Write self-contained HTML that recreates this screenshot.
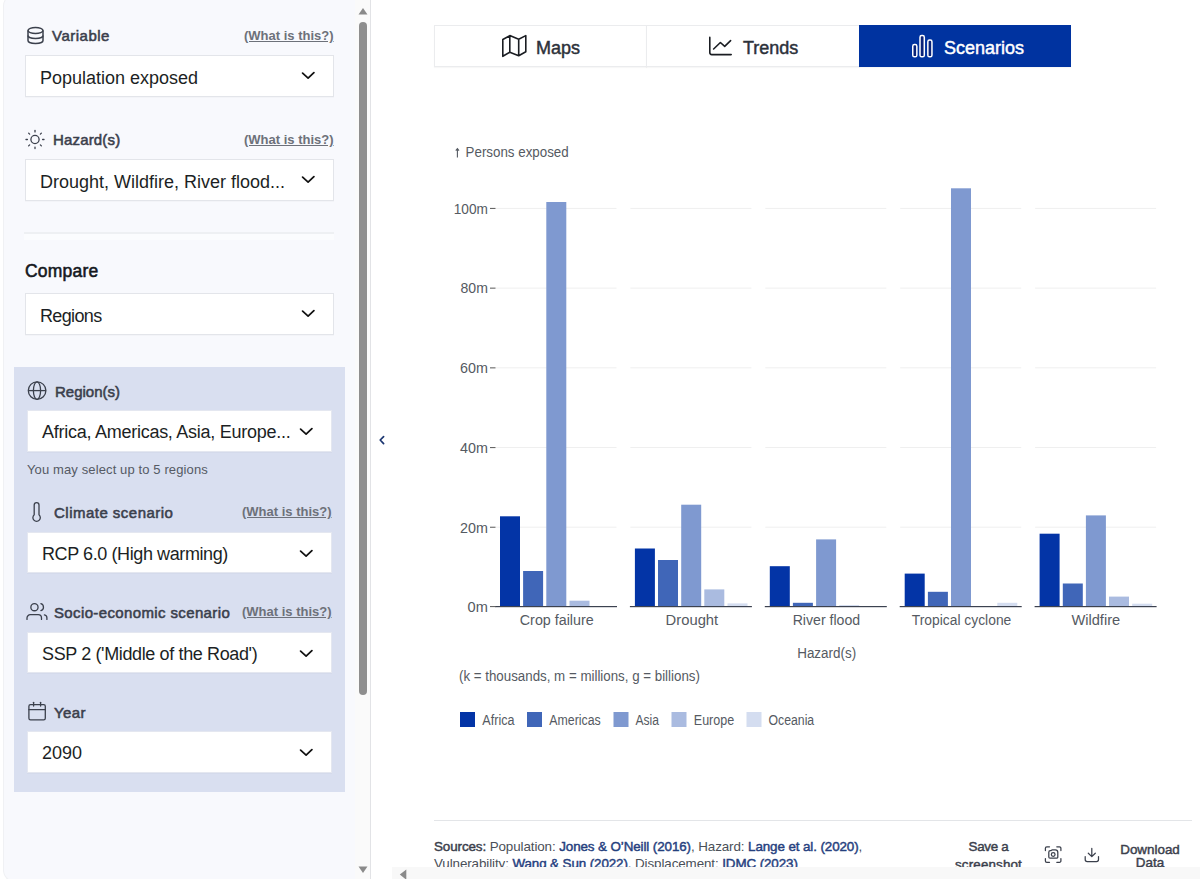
<!DOCTYPE html>
<html><head><meta charset="utf-8">
<style>
*{box-sizing:border-box;margin:0;padding:0}
html,body{width:1200px;height:879px;overflow:hidden;background:#fff;font-family:"Liberation Sans",sans-serif}
.abs{position:absolute}
#panel{position:absolute;left:3px;top:-6px;width:368px;height:888px;background:#f8f9fd;border-radius:12px 0 0 12px;border:1px solid #f0f1f4;border-right:1px solid #e2e3e6}
.lbl{position:absolute;font-size:15px;color:#3b404c;-webkit-text-stroke-width:0.55px;white-space:nowrap}
.what{position:absolute;font-size:13px;font-weight:bold;color:#6d717a;text-decoration:underline;white-space:nowrap}
.sel{position:absolute;background:#fff;border:1px solid #e3e5ea;height:42px;box-shadow:0 0.5px 0 rgba(0,0,0,0.04)}
.sel .t{position:absolute;left:14px;top:11.8px;font-size:18px;line-height:20px;color:#1c1f24;white-space:nowrap}
.sel.h{height:41px;border-color:#e4e7f0}
.sel.h .t{top:11px;left:14px}
.sel.h svg{top:16px;right:18.5px}
.sel svg{position:absolute;right:18px;top:15px}
#hl{position:absolute;left:14px;top:367px;width:331px;height:425px;background:#d9dff0}
.tab{position:absolute;top:25px;height:42px;border:1px solid #ebecee;box-shadow:0 1px 1px rgba(0,0,0,0.03);background:#fff;color:#2c313a;font-size:18px;line-height:20px;-webkit-text-stroke-width:0.45px}
.tab span{position:absolute;top:11.5px;white-space:nowrap}
.ft{font-size:13.4px;line-height:16px;color:#4a4f58;white-space:nowrap;letter-spacing:-0.1px}
.ft b{font-weight:normal;-webkit-text-stroke:0.45px #3b404c;color:#3b404c}
.ft b.lk{color:#25407e;-webkit-text-stroke-color:#25407e}
.bt{font-size:13.4px;line-height:14px;text-align:center;color:#3b404c;-webkit-text-stroke-width:0.45px;white-space:nowrap}
svg text{font-family:"Liberation Sans",sans-serif}
.yl{font-size:14.5px;fill:#555a62}
.xl{font-size:14px;fill:#555a62}
</style></head><body>
<div id="panel"></div>
<!-- vertical scrollbar -->
<div class="abs" style="left:355px;top:0;width:15px;height:879px;background:#fafafa"></div>
<svg class="abs" style="left:357px;top:7px" width="12" height="8"><path d="M1.5 7.5 L6 1 L10.5 7.5Z" fill="#8a8a8a"/></svg>
<div class="abs" style="left:359px;top:22px;width:8px;height:673px;background:#8e8e8e;border-radius:4px"></div>
<svg class="abs" style="left:357px;top:866px" width="12" height="8"><path d="M1.5 0.5 L6 7 L10.5 0.5Z" fill="#8a8a8a"/></svg>

<!-- Variable -->
<svg class="abs" style="left:26px;top:26px" width="19" height="19" viewBox="0 0 19 19" fill="none" stroke="#3b404c" stroke-width="1.5"><ellipse cx="9.5" cy="4.5" rx="7.5" ry="3"/><path d="M2 4.5v10c0 1.7 3.4 3 7.5 3s7.5-1.3 7.5-3v-10"/><path d="M2 9.5c0 1.7 3.4 3 7.5 3s7.5-1.3 7.5-3"/></svg>
<div class="lbl" style="left:52px;top:27px;letter-spacing:0.5px">Variable</div>
<div class="what" style="left:244px;top:28px">(What is this?)</div>
<div class="sel" style="left:25px;top:55px;width:309px"><div class="t">Population exposed</div><svg width="14" height="9" viewBox="0 0 14 9"><path d="M1.6 2.1L7.1 7.1L12.9 1.6" stroke="#111" stroke-width="1.75" fill="none" stroke-linecap="round" stroke-linejoin="round"/></svg></div>

<!-- Hazard -->
<div class="lbl" style="left:53px;top:131px;letter-spacing:0.17px">Hazard(s)</div>
<div class="what" style="left:244px;top:132px">(What is this?)</div>
<div class="sel" style="left:25px;top:159px;width:309px"><div class="t">Drought, Wildfire, River flood...</div><svg width="14" height="9" viewBox="0 0 14 9"><path d="M1.6 2.1L7.1 7.1L12.9 1.6" stroke="#111" stroke-width="1.75" fill="none" stroke-linecap="round" stroke-linejoin="round"/></svg></div>
<div class="abs" style="left:24px;top:232px;width:310px;height:2px;background:#eef0f3"></div><div class="abs" style="left:24px;top:234px;width:310px;height:6px;background:#fbfcfe"></div>

<svg class="abs" style="left:0;top:0" width="60" height="160"><g stroke="#3b404c" stroke-width="1.3" fill="none" stroke-linecap="round"><circle cx="35" cy="139.5" r="4.1"/><line x1="42.60" y1="139.50" x2="44.00" y2="139.50"/><line x1="40.37" y1="144.87" x2="41.36" y2="145.86"/><line x1="35.00" y1="147.10" x2="35.00" y2="148.50"/><line x1="29.63" y1="144.87" x2="28.64" y2="145.86"/><line x1="27.40" y1="139.50" x2="26.00" y2="139.50"/><line x1="29.63" y1="134.13" x2="28.64" y2="133.14"/><line x1="35.00" y1="131.90" x2="35.00" y2="130.50"/><line x1="40.37" y1="134.13" x2="41.36" y2="133.14"/></g></svg>
<!-- Compare -->
<div class="lbl" style="left:25px;top:261px;font-size:17.5px;color:#15181d;letter-spacing:0.2px">Compare</div>
<div class="sel" style="left:25px;top:293px;width:309px"><div class="t" style="letter-spacing:-0.65px;top:12.4px">Regions</div><svg width="14" height="9" viewBox="0 0 14 9"><path d="M1.6 2.1L7.1 7.1L12.9 1.6" stroke="#111" stroke-width="1.75" fill="none" stroke-linecap="round" stroke-linejoin="round"/></svg></div>

<div id="hl"></div>
<svg class="abs" style="left:0;top:360px" width="60" height="50"><g stroke="#3b404c" stroke-width="1.3" fill="none"><circle cx="37.1" cy="30.6" r="8.8"/><ellipse cx="37" cy="30.6" rx="3.6" ry="8.8"/><line x1="28.3" y1="30.6" x2="45.9" y2="30.6"/></g></svg>
<svg class="abs" style="left:0;top:490px" width="60" height="40"><path d="M34.2 24.8V15A2.4 2.4 0 0 1 39 15V24.8A3.7 3.7 0 1 1 34.2 24.8Z" stroke="#3b404c" stroke-width="1.3" fill="none"/></svg>
<svg class="abs" style="left:0;top:590px" width="60" height="40"><g stroke="#3b404c" stroke-width="1.3" fill="none" stroke-linecap="round"><circle cx="34.45" cy="17.15" r="3.6"/><path d="M40.9 13.7A3.6 3.6 0 0 1 40.9 20.6"/><path d="M27 29.4V28A3.3 3.3 0 0 1 30.3 24.7H38.2A3.3 3.3 0 0 1 41.5 28V29.4"/><path d="M44.4 24.8A3 3 0 0 1 46.9 27.8V29.4"/></g></svg>
<svg class="abs" style="left:0;top:690px" width="60" height="40"><g stroke="#3b404c" stroke-width="1.3" fill="none" stroke-linecap="round"><rect x="28.9" y="14.6" width="16.4" height="15.3" rx="1.6"/><line x1="28.9" y1="19.6" x2="45.3" y2="19.6"/><line x1="33.6" y1="12.3" x2="33.6" y2="16"/><line x1="40.6" y1="12.3" x2="40.6" y2="16"/></g></svg>
<div class="lbl" style="left:55px;top:383px">Region(s)</div>
<div class="sel h" style="left:27px;top:410px;width:305px;height:42px"><div class="t" style="letter-spacing:-0.26px">Africa, Americas, Asia, Europe...</div><svg width="14" height="9" viewBox="0 0 14 9"><path d="M1.6 2.1L7.1 7.1L12.9 1.6" stroke="#111" stroke-width="1.75" fill="none" stroke-linecap="round" stroke-linejoin="round"/></svg></div>
<div class="abs" style="left:27px;top:461.5px;font-size:13px;color:#555a64;letter-spacing:0.12px">You may select up to 5 regions</div>

<div class="lbl" style="left:54px;top:504px;letter-spacing:0.48px">Climate scenario</div>
<div class="what" style="left:242px;top:504px">(What is this?)</div>
<div class="sel h" style="left:27px;top:532px;width:305px;height:41px"><div class="t" style="letter-spacing:-0.4px">RCP 6.0 (High warming)</div><svg width="14" height="9" viewBox="0 0 14 9"><path d="M1.6 2.1L7.1 7.1L12.9 1.6" stroke="#111" stroke-width="1.75" fill="none" stroke-linecap="round" stroke-linejoin="round"/></svg></div>

<div class="lbl" style="left:54px;top:604px;letter-spacing:0.37px">Socio-economic scenario</div>
<div class="what" style="left:242px;top:604px">(What is this?)</div>
<div class="sel h" style="left:27px;top:632px;width:305px"><div class="t" style="letter-spacing:-0.37px">SSP 2 ('Middle of the Road')</div><svg width="14" height="9" viewBox="0 0 14 9"><path d="M1.6 2.1L7.1 7.1L12.9 1.6" stroke="#111" stroke-width="1.75" fill="none" stroke-linecap="round" stroke-linejoin="round"/></svg></div>

<div class="lbl" style="left:54px;top:704px;letter-spacing:0.37px">Year</div>
<div class="sel h" style="left:27px;top:731px;width:305px;height:42px"><div class="t">2090</div><svg width="14" height="9" viewBox="0 0 14 9"><path d="M1.6 2.1L7.1 7.1L12.9 1.6" stroke="#111" stroke-width="1.75" fill="none" stroke-linecap="round" stroke-linejoin="round"/></svg></div>

<!-- collapse -->
<svg class="abs" style="left:378px;top:435px" width="8" height="10" viewBox="0 0 8 10"><path d="M5.6 1.6L2.2 5L5.6 8.6" stroke="#1a3570" stroke-width="1.7" fill="none" stroke-linecap="round" stroke-linejoin="round"/></svg>

<!-- tabs -->
<div class="tab" style="left:434px;width:213px"><span style="left:101px">Maps</span></div>
<div class="tab" style="left:646px;width:214px"><span style="left:96px">Trends</span></div>
<div class="tab" style="left:859px;width:212px;background:#0033a0;border-color:#0033a0;color:#fff"><span style="left:84px">Scenarios</span></div>

<svg class="abs" style="left:0;top:0" width="1200" height="80"><g fill="none" stroke-linejoin="round" stroke-linecap="round"><path d="M502.8 39.5L509.8 35.6L518.7 39.2L525.8 35.6V51.8L518.7 55.7L509.8 52.2L502.8 56.3Z M509.8 35.6V52.2 M518.7 39.2V55.7" stroke="#1a1d22" stroke-width="1.6"/><path d="M709.8 37.4V52.6A2 2 0 0 0 711.8 54.6H731.2 M713.6 49L720.4 42.5L724.7 46.3L730.6 40.6" stroke="#1a1d22" stroke-width="1.6"/><g stroke="#fff" stroke-width="1.5" fill="#0a2379"><rect x="912.75" y="44.55" width="4.1" height="12.3" rx="1.7"/><rect x="920" y="35.45" width="4.3" height="21.4" rx="1.7"/><rect x="927.85" y="40" width="4.1" height="16.85" rx="1.7"/></g></g></svg>
<!-- chart -->
<svg class="abs" style="left:0;top:0" width="1200" height="879">
<rect x="495.5" y="526.7" width="121" height="1" fill="#efefef"/>
<rect x="495.5" y="447.0" width="121" height="1" fill="#efefef"/>
<rect x="495.5" y="367.3" width="121" height="1" fill="#efefef"/>
<rect x="495.5" y="287.6" width="121" height="1" fill="#efefef"/>
<rect x="495.5" y="207.9" width="121" height="1" fill="#efefef"/>
<rect x="630.4" y="526.7" width="121" height="1" fill="#efefef"/>
<rect x="630.4" y="447.0" width="121" height="1" fill="#efefef"/>
<rect x="630.4" y="367.3" width="121" height="1" fill="#efefef"/>
<rect x="630.4" y="287.6" width="121" height="1" fill="#efefef"/>
<rect x="630.4" y="207.9" width="121" height="1" fill="#efefef"/>
<rect x="765.3" y="526.7" width="121" height="1" fill="#efefef"/>
<rect x="765.3" y="447.0" width="121" height="1" fill="#efefef"/>
<rect x="765.3" y="367.3" width="121" height="1" fill="#efefef"/>
<rect x="765.3" y="287.6" width="121" height="1" fill="#efefef"/>
<rect x="765.3" y="207.9" width="121" height="1" fill="#efefef"/>
<rect x="900.2" y="526.7" width="121" height="1" fill="#efefef"/>
<rect x="900.2" y="447.0" width="121" height="1" fill="#efefef"/>
<rect x="900.2" y="367.3" width="121" height="1" fill="#efefef"/>
<rect x="900.2" y="287.6" width="121" height="1" fill="#efefef"/>
<rect x="900.2" y="207.9" width="121" height="1" fill="#efefef"/>
<rect x="1035.1" y="526.7" width="121" height="1" fill="#efefef"/>
<rect x="1035.1" y="447.0" width="121" height="1" fill="#efefef"/>
<rect x="1035.1" y="367.3" width="121" height="1" fill="#efefef"/>
<rect x="1035.1" y="287.6" width="121" height="1" fill="#efefef"/>
<rect x="1035.1" y="207.9" width="121" height="1" fill="#efefef"/>
<rect x="500.0" y="516.3" width="20" height="90.2" fill="#0334a6"/>
<rect x="523.1" y="571.0" width="20" height="35.5" fill="#4066b8"/>
<rect x="546.3" y="202.0" width="20" height="404.5" fill="#7f99d0"/>
<rect x="569.5" y="600.7" width="20" height="5.8" fill="#aabbe0"/>
<rect x="495.0" y="606.0" width="122" height="1.2" fill="#3c4250"/>
<text x="519.8" y="624.7" textLength="73.9" lengthAdjust="spacingAndGlyphs" class="xl">Crop failure</text>
<rect x="634.9" y="548.5" width="20" height="58.0" fill="#0334a6"/>
<rect x="658.0" y="560.0" width="20" height="46.5" fill="#4066b8"/>
<rect x="681.2" y="504.7" width="20" height="101.8" fill="#7f99d0"/>
<rect x="704.3" y="589.4" width="20" height="17.1" fill="#aabbe0"/>
<rect x="727.5" y="603.4" width="20" height="3.1" fill="#d4ddf0"/>
<rect x="629.9" y="606.0" width="122" height="1.2" fill="#3c4250"/>
<text x="665.6" y="624.7" textLength="52.6" lengthAdjust="spacingAndGlyphs" class="xl">Drought</text>
<rect x="769.8" y="566.2" width="20" height="40.3" fill="#0334a6"/>
<rect x="792.9" y="602.8" width="20" height="3.7" fill="#4066b8"/>
<rect x="816.1" y="539.4" width="20" height="67.1" fill="#7f99d0"/>
<rect x="839.2" y="605.5" width="20" height="1.0" fill="#aabbe0"/>
<rect x="764.8" y="606.0" width="122" height="1.2" fill="#3c4250"/>
<text x="792.7" y="624.7" textLength="67.4" lengthAdjust="spacingAndGlyphs" class="xl">River flood</text>
<rect x="904.7" y="573.6" width="20" height="32.9" fill="#0334a6"/>
<rect x="927.9" y="591.8" width="20" height="14.7" fill="#4066b8"/>
<rect x="951.0" y="188.3" width="20" height="418.2" fill="#7f99d0"/>
<rect x="997.3" y="602.8" width="20" height="3.7" fill="#d4ddf0"/>
<rect x="899.7" y="606.0" width="122" height="1.2" fill="#3c4250"/>
<text x="911.8" y="624.7" textLength="99.5" lengthAdjust="spacingAndGlyphs" class="xl">Tropical cyclone</text>
<rect x="1039.6" y="533.7" width="20" height="72.8" fill="#0334a6"/>
<rect x="1062.8" y="583.5" width="20" height="23.0" fill="#4066b8"/>
<rect x="1085.9" y="515.4" width="20" height="91.1" fill="#7f99d0"/>
<rect x="1109.0" y="596.6" width="20" height="9.9" fill="#aabbe0"/>
<rect x="1132.2" y="603.7" width="20" height="2.8" fill="#d4ddf0"/>
<rect x="1034.6" y="606.0" width="122" height="1.2" fill="#3c4250"/>
<text x="1071.4" y="624.7" textLength="48.8" lengthAdjust="spacingAndGlyphs" class="xl">Wildfire</text>
<rect x="490" y="606.0" width="5.5" height="1.1" fill="#666"/>
<text x="467.6" y="612.2" textLength="20.3" lengthAdjust="spacingAndGlyphs" class="yl">0m</text>
<rect x="490" y="526.7" width="5.5" height="1.1" fill="#666"/>
<text x="460.0" y="532.5" textLength="27.9" lengthAdjust="spacingAndGlyphs" class="yl">20m</text>
<rect x="490" y="447.0" width="5.5" height="1.1" fill="#666"/>
<text x="460.0" y="452.8" textLength="27.9" lengthAdjust="spacingAndGlyphs" class="yl">40m</text>
<rect x="490" y="367.3" width="5.5" height="1.1" fill="#666"/>
<text x="460.0" y="373.1" textLength="27.9" lengthAdjust="spacingAndGlyphs" class="yl">60m</text>
<rect x="490" y="287.6" width="5.5" height="1.1" fill="#666"/>
<text x="460.5" y="293.4" textLength="27.4" lengthAdjust="spacingAndGlyphs" class="yl">80m</text>
<rect x="490" y="207.9" width="5.5" height="1.1" fill="#666"/>
<text x="453.7" y="213.7" textLength="34.2" lengthAdjust="spacingAndGlyphs" class="yl">100m</text>
<text x="797.2" y="657.5" textLength="59.0" lengthAdjust="spacingAndGlyphs" class="xl">Hazard(s)</text>
<text x="459.0" y="680.8" textLength="240.9" lengthAdjust="spacingAndGlyphs" class="xl">(k = thousands, m = millions, g = billions)</text>
<rect x="460" y="712" width="15" height="15" fill="#0334a6"/>
<text x="482.3" y="724.7" textLength="32.2" lengthAdjust="spacingAndGlyphs" class="xl">Africa</text>
<rect x="527" y="712" width="15" height="15" fill="#4066b8"/>
<text x="549.3" y="724.7" textLength="51.4" lengthAdjust="spacingAndGlyphs" class="xl">Americas</text>
<rect x="613.5" y="712" width="15" height="15" fill="#7f99d0"/>
<text x="635.5" y="724.7" textLength="23.5" lengthAdjust="spacingAndGlyphs" class="xl">Asia</text>
<rect x="671.5" y="712" width="15" height="15" fill="#aabbe0"/>
<text x="693.8" y="724.7" textLength="40.4" lengthAdjust="spacingAndGlyphs" class="xl">Europe</text>
<rect x="746.5" y="712" width="15" height="15" fill="#d4ddf0"/>
<text x="768.5" y="724.7" textLength="45.7" lengthAdjust="spacingAndGlyphs" class="xl">Oceania</text>
<text x="465.6" y="157.3" textLength="103.1" lengthAdjust="spacingAndGlyphs" class="xl">Persons exposed</text>
<path d="M457.4 157.6V148.8M455.8 150.6L457.4 148.6L459 150.6" stroke="#555a62" stroke-width="1.1" fill="none"/>
</svg>

<!-- footer -->
<svg class="abs" style="left:0;top:0" width="1200" height="879"><g fill="none" stroke-linecap="round" stroke-linejoin="round"><g stroke="#3b404c" stroke-width="1.25"><path d="M1045.4 850.5V848.2A1.4 1.4 0 0 1 1046.8 846.8H1049.5 M1056.8 846.8H1059.5A1.4 1.4 0 0 1 1060.9 848.2V850.5 M1060.9 858.6V860.9A1.4 1.4 0 0 1 1059.5 862.3H1056.8 M1049.5 862.3H1046.8A1.4 1.4 0 0 1 1045.4 860.9V858.6"/><path d="M1048.8 852.2A1.5 1.5 0 0 1 1050.3 850.7H1050.8L1052 849.9H1055.3A2.6 2.6 0 0 1 1057.8 852.5V857A1.2 1.2 0 0 1 1056.6 858.2H1050A1.2 1.2 0 0 1 1048.8 857Z"/><circle cx="1053.2" cy="854.5" r="1.85"/><path d="M1091.8 848.4V856.4 M1088.3 853.2L1091.8 856.6L1095.3 853.2 M1085.2 856.6V859.6A2 2 0 0 0 1087.2 861.6H1096.5A2 2 0 0 0 1098.5 859.6V856.6"/></g></g></svg>
<div class="abs" style="left:434px;top:820px;width:758px;height:1px;background:#e3e5e8"></div>
<div class="abs ft" style="left:434px;top:839px">
<b>Sources:</b> Population: <b class="lk">Jones &amp; O’Neill (2016)</b>, Hazard: <b class="lk">Lange et al. (2020)</b>,</div>
<div class="abs ft" style="left:434px;top:855.8px">Vulnerability: <b class="lk">Wang &amp; Sun (2022)</b>, Displacement: <b class="lk">IDMC (2023)</b></div>
<div class="abs bt" style="left:938.5px;top:840px;width:100px;letter-spacing:-0.3px">Save a</div>
<div class="abs bt" style="left:938.5px;top:858px;width:100px;letter-spacing:0.15px">screenshot</div>
<div class="abs bt" style="left:1100px;top:843px;width:100px">Download</div>
<div class="abs bt" style="left:1100px;top:855.5px;width:100px">Data</div>
<!-- horizontal scrollbar -->
<div class="abs" style="left:392px;top:867px;width:808px;height:12px;background:#f8f8f8"></div>
<svg class="abs" style="left:398px;top:869px" width="10" height="12"><path d="M8.3 0.5 L1.8 5.6 L8.3 10.7Z" fill="#8a8a8a"/></svg>
</body></html>
